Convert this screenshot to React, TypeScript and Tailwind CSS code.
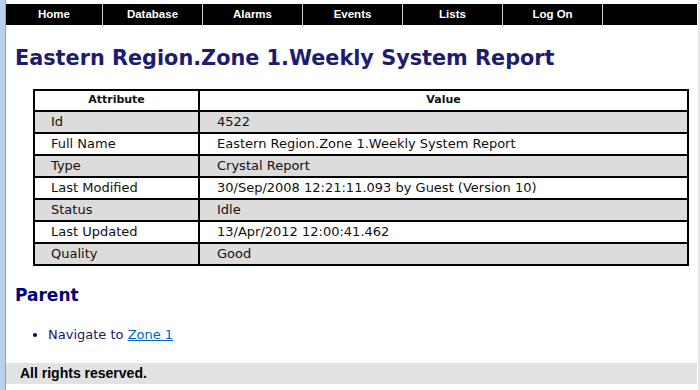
import React from "react";

const navItems = ["Home", "Database", "Alarms", "Events", "Lists", "Log On"];

const rows: [string, string][] = [
  ["Id", "4522"],
  ["Full Name", "Eastern Region.Zone 1.Weekly System Report"],
  ["Type", "Crystal Report"],
  ["Last Modified", "30/Sep/2008 12:21:11.093 by Guest (Version 10)"],
  ["Status", "Idle"],
  ["Last Updated", "13/Apr/2012 12:00:41.462"],
  ["Quality", "Good"],
];

const App = () => {
  return (
    <div className="w-[700px] h-[390px] flex bg-white overflow-hidden">
      <div className="w-[5px] bg-[#b9d1ea] border-r border-[#a0a0a0] box-content" />
      <div className="flex-1 flex flex-col font-['DejaVu_Sans',Verdana,sans-serif]">
        <div className="mt-[4px] h-[21px] flex bg-black font-['Liberation_Sans',Arial,sans-serif] font-bold text-[11.5px] text-white">
          {navItems.map((item, i) => (
            <div
              key={item}
              className={`flex items-center justify-center ${
                i === 0 ? "w-[96px]" : "w-[100px] border-l border-[#d0d0d0]"
              }`}
            >
              {item}
            </div>
          ))}
          <div className="flex-1 border-l border-[#d0d0d0]" />
        </div>

        <h1 className="mt-[19px] ml-[9px] text-[20.8px] leading-[28px] font-bold text-[#1c1c72]">
          Eastern Region.Zone 1.Weekly System Report
        </h1>

        <table className="mt-[17px] ml-[27px] w-[656px] border-separate border-spacing-0 border border-black text-[13px] text-[#111]">
          <thead>
            <tr className="h-[21px] bg-white text-[11px] font-bold">
              <th className="w-[165px] border border-black">Attribute</th>
              <th className="border border-black">Value</th>
            </tr>
          </thead>
          <tbody>
            {rows.map(([k, v], i) => (
              <tr key={k} className={`h-[22px] ${i % 2 === 0 ? "bg-[#dcdcdc]" : "bg-white"}`}>
                <td className="border border-black pl-[16px] py-0 leading-[18px]">{k}</td>
                <td className="border border-black pl-[17px] py-0 leading-[18px]">{v}</td>
              </tr>
            ))}
          </tbody>
        </table>

        <h2 className="mt-[18px] ml-[9px] text-[17px] leading-[22px] font-bold text-[#000080]">
          Parent
        </h2>

        <ul className="mt-[19px] ml-[27px] list-disc pl-[15px] text-[13px] text-[#1a1a5e] marker:text-[#000080]">
          <li>
            Navigate to{" "}
            <a href="#" className="text-[#0066cc] underline">
              Zone 1
            </a>
          </li>
        </ul>

        <div className="mt-[18px] h-[21px] bg-[#e2e2e2] pl-[14px] flex items-center font-['Liberation_Sans',Arial,sans-serif] font-bold text-[14px] text-black">
          All rights reserved.
        </div>
      </div>
      <div className="w-[3px] border-l border-white bg-[#e6e6e6]" />
    </div>
  );
};

export default App;
